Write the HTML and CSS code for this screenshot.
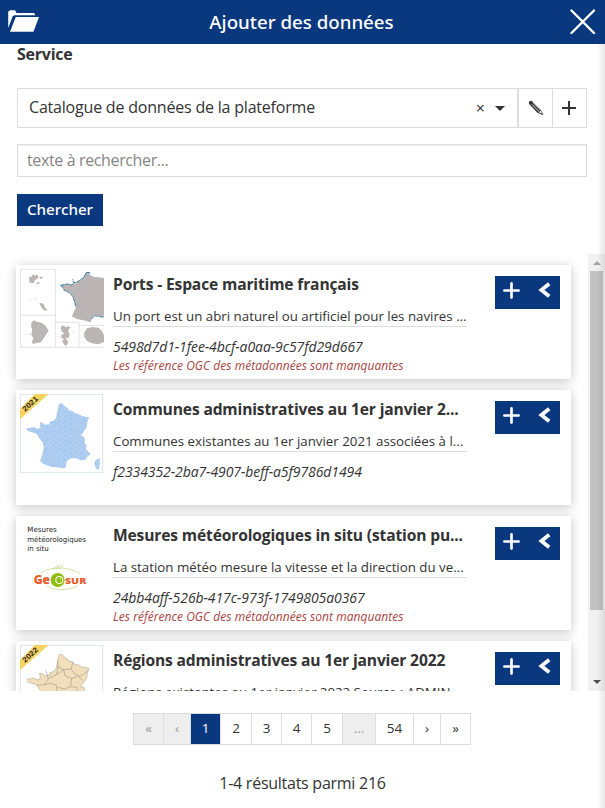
FILE: index.html
```html
<!DOCTYPE html>
<html lang="fr">
<head>
<meta charset="utf-8">
<title>Ajouter des données</title>
<link rel="stylesheet" href="styles.css">
</head>
<body>
<svg class="defs" width="0" height="0">
  <symbol id="plus" viewBox="0 0 16 16"><path d="M8 1.3v13.4M1.3 8h13.4" stroke="currentColor" stroke-width="2.5" stroke-linecap="round"/></symbol>
  <symbol id="chevron" viewBox="0 0 12 16"><path d="M10.7 1.8 2.9 8l7.8 6.2" fill="none" stroke="currentColor" stroke-width="3.8" stroke-linecap="butt" stroke-linejoin="miter"/></symbol>
  <symbol id="france" viewBox="50 55 225 207"><path d="M147 60l9 -2 8 9 9 5 3 7 10 1 8 8 10 1 12 7 11 2 10 2 -5 14 -2 16 -12 16 -6 11 8 -1 5 10 -2 9 7 11 -3 8 10 11 5 4 -11 11 -5 7 -13 2 -15 -6 -14 0 -13 7 -3 11 0 10 -14 1 -17 -3 -13 0 -24 -10 -10 -8 5 -11 6 -27 -3 -18 -11 -13 -4 -8 -7 -6 -14 -4 -11 -5 -3 -7 11 0 11 -3 13 6 8 -4 -2 -17 10 3 4 5 17 -1 -2 -6 16 -7 4 -7zM264 224l5 -2 1 17 -5 20 -8 -8 -4 -15 4 -7z"/></symbol>
</svg>
<header class="header">
  <svg class="folder" viewBox="0 0 31 22" width="31" height="22" fill="#fff"><path d="M.2 18V1.8L2 .3h5L8.5 3H26l1 1.2v1H6.7L4.8 6z"/><path d="M7.8 7H31l-5.5 14.7H2z"/></svg>
  <h1>Ajouter des données</h1>
  <svg class="close" viewBox="0 0 26 26" width="26" height="26"><path d="M1.5 1.5 24 24M24 1.5 1.5 24" stroke="#fff" stroke-width="2.4" stroke-linecap="round"/></svg>
</header>
<main>
  <div class="form">
    <div class="label">Service</div>
    <div class="select-row">
      <div class="select"><span class="value">Catalogue de données de la plateforme</span><span class="clear">×</span><span class="caret"></span></div>
      <button class="tool"><svg width="16" height="16" viewBox="0 0 16 16"><path d="M1.2 1.2 3.5.8 12.8 9.7 15.5 15.2 9.4 12.7.9 3.7z" fill="#333"/><path d="m3.8 4.3 7.3 7.4m-6-9 7.5 7.5" stroke="#fff" stroke-width=".8"/><path d="m10.8 12.4 2-1.8 1 2.8z" fill="#fff"/></svg></button>
      <button class="tool last"><svg width="14" height="14" viewBox="0 0 14 14"><path d="M7 0v14M0 7h14" stroke="#333" stroke-width="2"/></svg></button>
    </div>
    <input class="search" type="text" placeholder="texte à rechercher...">
    <button class="submit">Chercher</button>
  </div>
  <div class="viewport">
    <div class="list">
      <article class="card">
        <svg class="thumb" viewBox="30 42 252 237">
          <g fill="none" stroke="#d3d3d3" stroke-width="2"><path d="M31 43h105v234H31zM31 181h105M136 202h71v75h-71M207 211h75M207 277h75"/></g>
          <path fill="#bab4b4" d="M282 69L268 67 254 66 243 62 235 51 227 51 222 67 209 76 200 81 198 86 191 85 188 73 190 86 184 90 172 87 151 91 159 98 163 106 177 112 188 124 193 138 198 156 186 184 200 192 220 196 242 202 247 187 257 181 282 187z"/>
          <path fill="none" stroke="#3d7fab" stroke-width="3" stroke-dasharray="12 2" d="M240 53 230 52 222 67 209 76 200 82 191 83 188 73M190 86 184 90 172 87 151 91 159 98 163 106 177 112 188 124 193 138 198 156M244 192 254 182 282 187"/>
          <g fill="#bbb5b5"><path d="m57 66 8-1 4-7 8 4 6-4 2 10-10 8-4 8-12-1zm32 0 9-1-1 7-8-2zm-9 16 9 0-1 4-8 1zm8 63 7-1 8 6 2 8 6 5-1 5-10-4-6-7z"/><path d="m65 202 7-6 9 4 16 5 10 8 9 14-9 13-8 13-6 9-24 4-4-3 5-13-6-11 3-15-4-11z"/><path d="m151 218 7-7 11 6 4-3 8 3-7 11 5 9-3 12-10-1 9 12-4 10-6 2-9-13 6-7-8-3 1-11 9-2-8-6zM222 234l9-14 16-4 18 2 11 10 6 13v20l-17 7-19-3-15-7-8-12z"/></g>
          <path fill="none" stroke="#c6c6c6" d="M57 137v-7m5 7h6m3-8h8v8M40 238h20m-2-4h4v8M140 244h12m34-15h9M214 262h13"/>
        </svg>
        <div class="text"><h2>Ports - Espace maritime français</h2><p class="desc">Un port est un abri naturel ou artificiel pour les navires ...</p><p class="ident">5498d7d1-1fee-4bcf-a0aa-9c57fd29d667</p><p class="warn">Les référence OGC des métadonnées sont manquantes</p></div>
        <div class="actions"><svg width="17" height="17"><use href="#plus"/></svg><svg width="13" height="16"><use href="#chevron"/></svg></div>
      </article>
      <article class="card">
        <svg class="thumb" viewBox="30 30 252 237">
          <defs><pattern id="grain" width="37" height="29" patternUnits="userSpaceOnUse"><path d="M2 3h4m13 1h3M9 9h4m-9 6h3m22-3h3M17 17h3M7 24h3m15-2h3" stroke="#cfe1f7" stroke-width="3"/><path d="M8 2h3m20 3h3M15 11h3m5 8h3M2 20h4m8 6h3" stroke="#9cc2ed" stroke-width="3"/></pattern></defs>
          <path fill="#fff" stroke="#c3d8e6" stroke-width="2" d="M31 31h247v235H31z"/>
          <svg x="50" y="55" width="225" height="207"><use href="#france" fill="#abcaf0"/><use href="#france" fill="url(#grain)"/></svg>
          <path fill="#fbd35f" d="M30 75 75 30h41L30 106z"/><text class="year" transform="translate(45 84) rotate(-43)" textLength="56" lengthAdjust="spacingAndGlyphs">2021</text>
        </svg>
        <div class="text"><h2>Communes administratives au 1er janvier 2...</h2><p class="desc">Communes existantes au 1er janvier 2021 associées à l...</p><p class="ident">f2334352-2ba7-4907-beff-a5f9786d1494</p></div>
        <div class="actions"><svg width="17" height="17"><use href="#plus"/></svg><svg width="13" height="16"><use href="#chevron"/></svg></div>
      </article>
      <article class="card">
        <svg class="thumb" viewBox="30 30 252 237">
          <g class="caption"><text x="52" y="67" textLength="88" lengthAdjust="spacingAndGlyphs">Mesures</text><text x="52" y="96" textLength="176" lengthAdjust="spacingAndGlyphs">météorologiques</text><text x="52" y="123" textLength="64" lengthAdjust="spacingAndGlyphs">in situ</text></g>
          <g fill="none" stroke="#b9d77c" stroke-width="2"><path d="M93 192q10-16 51-18 36-1 67 17M110 228q25 14 57 10 25-3 36-12M127 178l21-13M138 177q10-3 14-14M148 178q10-5 12-15"/></g>
          <text class="brand" x="71" y="221" font-size="35" textLength="49" lengthAdjust="spacingAndGlyphs">Ge</text>
          <circle cx="143" cy="210" r="21" fill="#8fbd0c"/><circle cx="148" cy="210" r="12" fill="#fff"/><circle cx="148" cy="210" r="9" fill="#8fbd0c"/><circle cx="151" cy="206" r="2" fill="#fff"/>
          <text class="brand" x="165" y="221" font-size="26" textLength="64" lengthAdjust="spacingAndGlyphs">SUR</text>
        </svg>
        <div class="text"><h2>Mesures météorologiques in situ (station pu...</h2><p class="desc">La station météo mesure la vitesse et la direction du ve...</p><p class="ident">24bb4aff-526b-417c-973f-1749805a0367</p><p class="warn">Les référence OGC des métadonnées sont manquantes</p></div>
        <div class="actions"><svg width="17" height="17"><use href="#plus"/></svg><svg width="13" height="16"><use href="#chevron"/></svg></div>
      </article>
      <article class="card">
        <svg class="thumb" viewBox="30 30 252 237">
          <path fill="#fff" stroke="#c3d8e6" stroke-width="2" d="M31 31h247v235H31z"/>
          <svg x="50" y="55" width="225" height="207"><use href="#france" fill="#f1dfbb" stroke="#a49b87" stroke-width="1.5"/></svg>
          <path fill="none" stroke="#8d877b" stroke-width="1.5" d="M143 76l2 20 16 8 22-2 7-23M107 106l8 25-12 18-23 2M115 131l24-12 6-23M103 149l19-4 17 6 4 30-23 3M139 119l22-15 4 18 20 9-4 24-16 7-22-5M183 102l11 15 17 7 22-16M185 131l18-7 15 12M181 155l19 2 8 24M143 181l21 4 11-10 20 8-5 20M120 184l-12 30"/>
          <path fill="#fbd35f" d="M30 75 75 30h41L30 106z"/><text class="year" transform="translate(45 84) rotate(-43)" textLength="56" lengthAdjust="spacingAndGlyphs">2022</text>
        </svg>
        <div class="text"><h2>Régions administratives au 1er janvier 2022</h2><p class="desc">Régions existantes au 1er janvier 2022 Source : ADMIN...</p></div>
        <div class="actions"><svg width="17" height="17"><use href="#plus"/></svg><svg width="13" height="16"><use href="#chevron"/></svg></div>
      </article>
    </div>
    <div class="scrollbar"><i class="up"></i><div class="thumb-bar"></div><i class="down"></i></div>
  </div>
  <nav class="pages"><span class="off w1">«</span><span class="off w2">‹</span><span class="current">1</span><span class="w3">2</span><span>3</span><span>4</span><span class="w3">5</span><span class="off w4">...</span><span class="w5">54</span><span class="w2">›</span><span>»</span></nav>
  <p class="summary">1-4 résultats parmi 216</p>
</main>
<div class="edge"></div>
</body>
</html>
```

FILE: styles.css
```css
* { box-sizing: border-box; }
body { margin: 0; height: 808px; overflow: hidden; background: #fff; color: #333; font: 16px "Open Sans", "Noto Sans", sans-serif; }
h1, h2, p { margin: 0; }
button { font: inherit; border: 0; padding: 0; }
.defs { position: absolute; }
.header { height: 44px; padding: 0 9px 0 8px; background: #0a387f; color: #fff; display: flex; align-items: center; justify-content: space-between; }
.header h1 { font-family: "Noto Sans", sans-serif; font-size: 18.7px; font-weight: 500; line-height: 44px; margin-left: -6px; }
.folder { margin-top: -2px; }
.form { height: 210px; padding: 0 18px 0 17px; }
.label { font-size: 16px; font-weight: 700; letter-spacing: -.25px; line-height: 20px; height: 44px; }
.select-row { display: flex; height: 40px; border: 1px solid #ddd; }
.select { flex: 1; display: flex; align-items: center; padding: 0 12px 0 11px; font-size: 16px; border-right: 1px solid #ddd; }
.value { flex: 1; margin-top: -2px; letter-spacing: -.2px; }
.clear { font-size: 16px; margin-right: 10px; }
.caret { border: 5px solid transparent; border-top-color: #333; border-bottom: 0; }
.tool { width: 34px; background: #fff; display: flex; align-items: center; justify-content: center; border-left: 1px solid #ddd; }
.tool.last { padding-right: 1px; }
.search { display: block; width: 100%; height: 33px; margin: 16px 0 17px; padding: 0 9px 2px; border: 1px solid #ddd; box-shadow: inset 0 1px 2px #0001; font: 16px "Open Sans", sans-serif; letter-spacing: -.37px; }
.search::placeholder { color: #858585; opacity: 1; }
.submit { width: 86px; height: 32px; padding-bottom: 2px; background: #0a387f; color: #fff; font: 500 15.2px "Noto Sans", sans-serif; }
.viewport { display: flex; height: 437px; overflow: hidden; }
.list { width: 588px; height: 437px; overflow: hidden; padding: 11px 17px 0 16px; }
.card { height: 114.4px; margin-bottom: 11px; padding: 4px 11px 0 4px; display: flex; background: #fff; box-shadow: 0 2px 10px rgba(0,0,0,.23); }
.thumb { width: 84px; height: 79px; flex: none; }
.text { width: 360px; margin: 0 -6px 0 9px; }
.text h2, .desc { white-space: nowrap; }
.text h2 { font-size: 15.6px; font-weight: 700; letter-spacing: -.15px; line-height: 22px; margin-top: 4px; }
.desc { width: 354px; font-size: 13.3px; line-height: 20px; height: 21px; margin-top: 11px; border-bottom: 1px solid #ddd; }
.ident { font-size: 14px; letter-spacing: -.08px; line-height: 20px; font-style: italic; margin-top: 10px; }
.warn { font-size: 12px; letter-spacing: .04px; line-height: 16px; font-style: italic; color: #a94442; margin-top: 1px; white-space: nowrap; }
.actions { width: 65px; height: 33px; margin: 7px 0 0 auto; padding: 6px 9px 0 8px; display: flex; justify-content: space-between; background: #0a387f; color: #fff; }
.year { font: bold 22px "Liberation Sans", sans-serif; fill: #222; }
.caption { font: 22px "DejaVu Sans", sans-serif; fill: #222; }
.brand { font-family: "Open Sans", sans-serif; font-weight: 800; fill: #e75b2b; }
.scrollbar { width: 17px; background: #f1f1f1; display: flex; flex-direction: column; align-items: center; }
.scrollbar i { border: 4px solid transparent; }
.up { margin-top: 7px; border-top: 0 !important; border-bottom-color: #a3a3a3 !important; }
.thumb-bar { width: 13px; height: 339px; margin-top: 6px; background: #c1c1c1; }
.down { margin: auto 0 7px; border-bottom: 0 !important; border-top-color: #505050 !important; }
.pages { display: flex; width: 338px; height: 32px; margin: 22px 0 0 133px; border: 1px solid #ddd; font-size: 13.5px; line-height: 29px; text-align: center; }
.pages span { width: 30px; border-right: 1px solid #ddd; flex: none; }
.pages span:last-child { border: 0; width: 29px; }
.pages .off { background: #eee; color: #999; }
.pages .current { background: #0a387f; color: #fff; font-weight: 500; }
.pages .w2 { width: 27px; }
.pages .w3 { width: 31px; }
.pages .w4 { width: 33px; }
.pages .w5 { width: 38px; }
.summary { margin-top: 27px; font-size: 16px; letter-spacing: -.26px; line-height: 22px; text-align: center; }
.edge { position: absolute; top: 44px; right: 0; bottom: 0; width: 8px; background: linear-gradient(90deg, transparent, rgba(0,0,0,.09)); }
```
